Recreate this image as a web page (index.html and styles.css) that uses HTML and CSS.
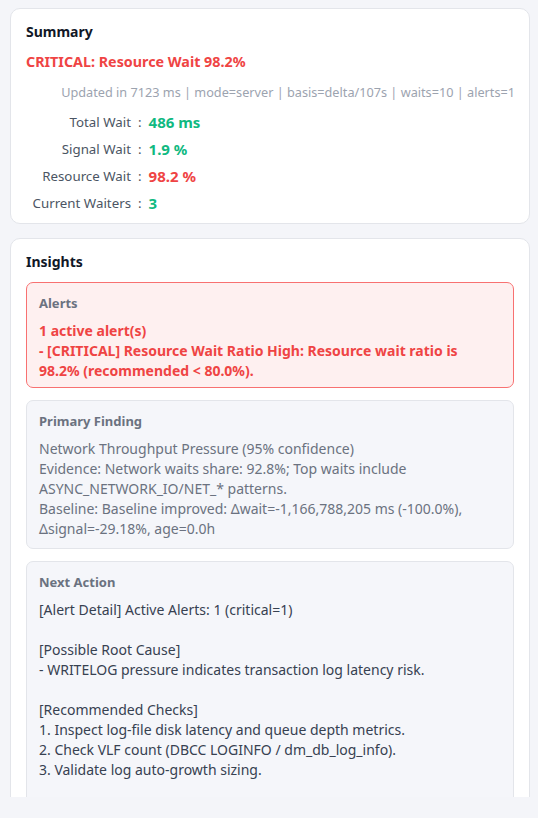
FILE: index.html
```html
<!DOCTYPE html>
<html lang="en">
<head>
    <meta charset="UTF-8">
    <meta name="viewport" content="width=device-width, initial-scale=1.0">
    <title>Wait Stats</title>
    <link rel="stylesheet" href="styles.css">
</head>
<body>

    <div class="page">

        <!-- Summary -->
        <div class="card">
            <div class="card-title">Summary</div>
            <div class="headline">CRITICAL: Resource Wait 98.2%</div>
            <div class="meta">Updated in 7123 ms | mode=server | basis=delta/107s | waits=10 | alerts=1</div>
            <div class="metrics">
                <span class="label">Total Wait</span><span class="sep">:</span><span class="value good">486 ms</span>
                <span class="label">Signal Wait</span><span class="sep">:</span><span class="value good">1.9 %</span>
                <span class="label">Resource Wait</span><span class="sep">:</span><span class="value bad">98.2 %</span>
                <span class="label">Current Waiters</span><span class="sep">:</span><span class="value good">3</span>
            </div>
        </div>

        <!-- Insights -->
        <div class="card">
            <div class="card-title">Insights</div>

            <div class="box alert">
                <div class="box-title">Alerts</div>
                <div class="box-text">1 active alert(s)
- [CRITICAL] Resource Wait Ratio High: Resource wait ratio is 98.2% (recommended &lt; 80.0%).</div>
            </div>

            <div class="box finding">
                <div class="box-title">Primary Finding</div>
                <div class="box-text">Network Throughput Pressure (95% confidence)
Evidence: Network waits share: 92.8%; Top waits include ASYNC_NETWORK_IO/NET_* patterns.
Baseline: Baseline improved: Δwait=-1,166,788,205 ms (-100.0%), Δsignal=-29.18%, age=0.0h</div>
            </div>

            <div class="box action">
                <div class="box-title">Next Action</div>
                <div class="box-text">[Alert Detail] Active Alerts: 1 (critical=1)

[Possible Root Cause]
- WRITELOG pressure indicates transaction log latency risk.

[Recommended Checks]
1. Inspect log-file disk latency and queue depth metrics.
2. Check VLF count (DBCC LOGINFO / dm_db_log_info).
3. Validate log auto-growth sizing.</div>
            </div>
        </div>

    </div>

</body>
</html>
```

FILE: styles.css
```css
* { box-sizing: border-box; }
body { margin: 0; background: #f4f5f9; font-family: "Segoe UI", "Noto Sans", sans-serif; color: #374151; }
.page { height: 797px; overflow: hidden; padding: 8px 8px 0 10px; }
.card { background: #ffffff; border: 1px solid #e3e5ea; border-radius: 10px; padding: 13px 15px 10px; margin-bottom: 14px; }
.card-title { font-size: 14px; font-weight: bold; line-height: 20px; color: #111827; margin-bottom: 10px; }
.headline { font-size: 14.3px; font-weight: bold; line-height: 20px; color: #ef4444; margin-bottom: 10px; }
.meta { font-size: 12.7px; line-height: 20px; color: #9ca3af; text-align: right; margin-bottom: 10px; margin-right: -1px; }
.metrics { display: grid; grid-template-columns: 105px auto 1fr; column-gap: 7px; row-gap: 7px; font-size: 13.3px; line-height: 20px; }
.label { text-align: right; color: #4b5563; }
.sep { color: #4b5563; }
.value { font-size: 15px; font-weight: bold; }
.good { color: #10b981; }
.bad { color: #ef4444; }
.box { border: 1px solid #e3e5ea; background: #f5f6fa; border-radius: 7px; padding: 10px 12px 9px; margin-bottom: 12px; }
.box-title { font-size: 13px; font-weight: bold; line-height: 20px; color: #6b7280; margin-bottom: 8px; }
.box-text { font-size: 14px; line-height: 20px; white-space: pre-wrap; }
.alert { background: #fef0f0; border-color: #f87171; padding-bottom: 6px; }
.alert .box-text { color: #ef4444; font-weight: bold; }
.finding .box-text { color: #6b7280; }
.action { padding-bottom: 40px; }
.action .box-text { color: #374151; }
```
